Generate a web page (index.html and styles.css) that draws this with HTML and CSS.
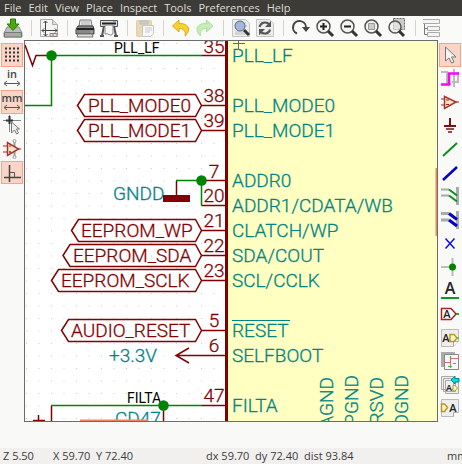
FILE: index.html
```html
<!DOCTYPE html>
<html lang="en">
<head>
<meta charset="utf-8">
<title>Schematic editor</title>
<link rel="stylesheet" href="styles.css">
</head>
<body>
<nav class="menu" aria-label="Main menu">
<button>File</button><button>Edit</button><button>View</button><button>Place</button><button>Inspect</button><button>Tools</button><button>Preferences</button><button>Help</button>
</nav>

<div class="toolbar" role="toolbar" aria-label="Main toolbar">
<button aria-label="Save"><svg viewBox="0 0 20 20"><path d="M4 9h12l3 6v4H1v-4z" fill="#bdbdbd" stroke="#8d8d8d"/><path d="M1.500 14.500h17V19h-17z" fill="#a9a9a9" stroke="#777"/><path d="M14 17h3" stroke="#4e4"/><path d="M7.500 1h5v5H16l-6 6.500L4 6h3.500z" fill="#49a80d" stroke="#2d7803"/></svg></button>
<i class="sep"></i>
<button aria-label="Page settings"><svg viewBox="0 0 20 20"><path d="M1.500 1.500h12l5 5v12h-17z" fill="#f4f4f4" stroke="#aaa"/><path d="M13.500 1.500v5h5" fill="#ddd" stroke="#aaa"/><path d="M6.500 3v15M3 12.500h15M4.500 5l2-2 2 2M4.500 16l2 2 2-2M5 10.500l-2 2 2 2M16 10.500l2 2-2 2" fill="none" stroke="#444"/><path d="M11 15.500h7v3h-7z" fill="#ddd" stroke="#888"/><path d="M13 17h2" stroke="#e55"/></svg></button>
<i class="sep"></i>
<button aria-label="Print"><svg viewBox="0 0 20 20"><path d="M4 8l1-6h11l1 6z" fill="#eee" stroke="#777"/><path d="M6 4h9M6 6h9" stroke="#aaa"/><path d="M3 8h15l1 3v5H1v-5z" fill="#888" stroke="#444"/><path d="M2 11h17" stroke="#222" stroke-width="2"/><path d="M3 16h14l1 3H2z" fill="#ddd" stroke="#777"/><path d="M15 14h3" stroke="#9c6"/></svg></button>
<button aria-label="Plot"><svg viewBox="0 0 20 20"><path d="M1.500 2.500h17v6h-17z" fill="#ddd" stroke="#555"/><path d="M3 5.500h14" stroke="#222" stroke-width="2"/><path d="M5 8l-2 10M15 8l2 10M1 18h4M15 18h4" stroke="#555" stroke-width="2"/><path d="M6 7h8v8q-1 3-3 2-3-2-5-1z" fill="#f7f7f7" stroke="#888"/><path d="M14 3.500h3" stroke="#6d5"/></svg></button>
<i class="sep"></i>
<button aria-label="Paste" disabled><svg viewBox="0 0 20 20"><rect x="1.500" y="2.500" width="15" height="16" rx="1" fill="#ead7b5" stroke="#e2cda8"/><path d="M5 3h8v3H5z" fill="#ccc" stroke="#bbb"/><path d="M7.500 7.500h11v8l-3 3h-8z" fill="#f8f8f8" stroke="#c5c5c5"/><path d="M10 10h7M10 12h7M10 14h5" stroke="#ccc"/></svg></button>
<i class="sep"></i>
<button aria-label="Undo"><svg viewBox="0 0 20 20"><path d="M1.500 8L8 2v3.500c9-.5 13 6 6 12.500 1-5-1.500-7.500-6-7.500V14z" fill="#f7d32d" stroke="#e0a51b"/></svg></button>
<button aria-label="Redo" disabled><svg viewBox="0 0 20 20"><path d="M18 8l-6.500-6v3.500c-9-.5-13 6-6 12.500-1-5 1.500-7.500 6-7.500V14z" fill="#c5edb8" stroke="#acdda5"/></svg></button>
<i class="sep"></i>
<button aria-label="Find"><svg viewBox="0 0 20 20"><path d="M1.500 1.500h13l4 4v13h-17z" fill="#eee" stroke="#c4c4c4"/><path d="M4 5h11M4 8h12M4 14h9M4 16h12" stroke="#bbb"/><circle cx="9" cy="8" r="5" fill="#9eb8df" stroke="#667"/><path d="M13 12l5 5" stroke="#333" stroke-width="3"/></svg></button>
<button aria-label="Find and replace"><svg viewBox="0 0 20 20"><path d="M1.500 1.500h13l4 4v13h-17z" fill="#eee" stroke="#c4c4c4"/><path d="M4 4h9M4 16.500h12" stroke="#ccc"/><path d="M4.500 9c1-5 7-5.500 10-2.500M15 11.500c-1 5-7 5-10 2" fill="none" stroke="#555" stroke-width="2"/><path d="M16 3v6h-6zM4 17v-6h6z" fill="#555"/></svg></button>
<i class="sep"></i>
<button aria-label="Redraw"><svg viewBox="0 0 20 20"><path d="M6 15.500A6.500 6.500 0 1 1 15 10" fill="none" stroke="#444" stroke-width="2"/><path d="M11 9h8l-4 5z" fill="#444"/></svg></button>
<button aria-label="Zoom in"><svg viewBox="0 0 20 20"><circle cx="8.500" cy="8.500" r="6.500" fill="#f4f4f4" stroke="#555" stroke-width="1.500"/><path d="M5 8.500h7M8.500 5v7" stroke="#222" stroke-width="2"/><path d="M13 13l5 5" stroke="#333" stroke-width="3"/></svg></button>
<button aria-label="Zoom out"><svg viewBox="0 0 20 20"><circle cx="8.500" cy="8.500" r="6.500" fill="#f4f4f4" stroke="#555" stroke-width="1.500"/><path d="M5 8.500h7" stroke="#222" stroke-width="2"/><path d="M13 13l5 5" stroke="#333" stroke-width="3"/></svg></button>
<button aria-label="Zoom to fit"><svg viewBox="0 0 20 20"><circle cx="8.500" cy="8.500" r="6.500" fill="#f4f4f4" stroke="#555" stroke-width="1.500"/><path d="M5.500 5.500h6v6h-6z" fill="#ccc" stroke="#999"/><path d="M13 13l5 5" stroke="#333" stroke-width="3"/></svg></button>
<button aria-label="Zoom to selection"><svg viewBox="0 0 20 20"><path d="M6.500.5h11v11h-11z" fill="#ccc" stroke="#666" stroke-dasharray="2 1"/><circle cx="8" cy="9" r="6" fill="#eee" fill-opacity=".6" stroke="#555" stroke-width="1.500"/><path d="M12 13l5 5" stroke="#333" stroke-width="3"/></svg></button>
<i class="sep"></i>
<button aria-label="Hierarchy"><svg viewBox="2 0 20 20"><path d="M1.500 1.500h17v4h-17zM6.500 8.500h12v4h-12zM6.500 14.500h12v4h-12z" fill="#f4f4f4" stroke="#aaa"/><path d="M3.500 6v10.500h3M3.500 10.500h3" fill="none" stroke="#777"/></svg></button>
</div>

<main class="work">
<div class="tools" role="toolbar" aria-label="Display options">
<button class="on" aria-label="Grid"><svg viewBox="0 0 20 20"><path d="M3 3.500h15M3 7.500h15M3 11.500h15M3 15.500h15" stroke="#333" stroke-width="2" stroke-dasharray="2 2"/></svg></button>
<button aria-label="Inches"><svg viewBox="0 0 20 20"><text class="unit" x="10" y="10">in</text><path d="M2 15.500h16M5 13l-3 2.500L5 18M15 13l3 2.500-3 2.500" fill="none" stroke="#555"/></svg></button>
<button class="on" aria-label="Millimetres"><svg viewBox="0 0 20 20"><text class="unit" x="10" y="10">mm</text><path d="M2 15.500h16M5 13l-3 2.500L5 18M15 13l3 2.500-3 2.500" fill="none" stroke="#555"/></svg></button>
<button aria-label="Full-window cursor"><svg viewBox="0 0 20 20"><path d="M1 5.500h18M7.500 0v17" stroke="#888"/><path d="M4 5.500h7M7.500 1v8" stroke="#333" stroke-width="2"/><path d="M9.500 7v11l3-3 2 4 2-1-2-4h3z" fill="#eee" stroke="#777"/></svg></button>
<button aria-label="Hidden pins"><svg viewBox="0 0 20 20"><path d="M12.500 1v18" stroke="#999" stroke-width="2"/><circle cx="12.500" cy="2" r="1.500" fill="#fff" stroke="#999"/><circle cx="12.500" cy="18" r="1.500" fill="#fff" stroke="#999"/><path d="M5.500 3.500v13l11-6.500z" fill="#fbe5c2" stroke="#a33" stroke-width="1.500"/><path d="M1 7h4M1 13h4M16 10h3M7 7h2M7 13h2M8 12v2" stroke="#a22"/></svg></button>
<button class="on" aria-label="Orthogonal wires"><svg viewBox="0 0 20 20"><path d="M7.500 2v17M2 14.500h17" stroke="#444" stroke-width="1.500"/><path d="M8 9.500h4.500V14" fill="none" stroke="#555"/></svg></button>
</div>

<svg class="sheet" viewBox="25 41 412 380" preserveAspectRatio="xMinYMin slice" role="img" aria-label="Schematic sheet">
<defs><pattern id="grid" x="26" y="43" width="12.500" height="12.500" patternUnits="userSpaceOnUse"><path d="M0 0h1v1H0z" fill="#ccc"/></pattern></defs>
<path d="M25 41h412v380H25z" fill="url(#grid)"/>
<path d="M226 30h220v400H226z" fill="#ffffc2"/>
<path class="edge" d="M226.500 30v400"/>
<path class="wire" d="M51 55.500h151M51.500 55.500v50H25M176 180.500h25.500v25M51 405.500h151"/>
<path class="red" d="M25 45l7.500 20.500 3.500-10h15M202 55.500h24M201.500 105.500H226M201.500 130.500H226M202 180.500h24M201.500 205.500H226M201.500 230.500H226M201.500 255.500H226M201.500 280.500H226M201.500 330.500H226M176 355.500h50M189 348l-13 7.500 13 7.500M202 405.500h24M176.500 181v14M51.500 406v15M163.500 406v15M33 420.500h12M38.500 415v6"/>
<path d="M163 195h27v7h-27z" fill="#840000"/>
<g class="red">
<path d="M77.500 105.500l7-11h111l6 11-6 11h-111z"/>
<path d="M77.500 130.500l7-11h111l6 11-6 11h-111z"/>
<path d="M71.500 230.500l7-11h117l6 11-6 11h-117z"/>
<path d="M63 255.500l7-11h125.500l6 11-6 11H70z"/>
<path d="M51.500 280.500l7-11h137l6 11-6 11h-137z"/>
<path d="M61.500 330.500l7-11h127l6 11-6 11h-127z"/>
</g>
<g class="label">
<text x="88" y="112">PLL_MODE0</text><text x="88" y="137">PLL_MODE1</text>
<text x="81" y="237">EEPROM_WP</text><text x="73" y="262">EEPROM_SDA</text><text x="61" y="287">EEPROM_SCLK</text>
<text x="71" y="337">AUDIO_RESET</text>
</g>
<g class="label number">
<text x="214" y="53">35</text><text x="214" y="102">38</text><text x="214" y="127">39</text><text x="214" y="178">7</text><text x="214" y="202">20</text><text x="214" y="227">21</text><text x="214" y="252">22</text><text x="214" y="277">23</text><text x="214" y="327">5</text><text x="214" y="352">6</text><text x="214" y="402">47</text>
</g>
<g class="pin">
<text x="232" y="62">PLL_LF</text><text x="232" y="112">PLL_MODE0</text><text x="232" y="137">PLL_MODE1</text>
<text x="232" y="187">ADDR0</text><text x="232" y="212">ADDR1/CDATA/WB</text><text x="232" y="237">CLATCH/WP</text><text x="232" y="262">SDA/COUT</text><text x="232" y="287">SCL/CCLK</text>
<text x="232" y="337">RESET</text><text x="232" y="362">SELFBOOT</text><text x="232" y="412">FILTA</text>
<text x="113" y="200">GNDD</text><text x="109" y="362">+3.3V</text><text x="115" y="425">CD47</text>
<g class="upright">
<text transform="translate(333 377) rotate(-90)">AGND</text><text transform="translate(358 375) rotate(-90)">PGND</text><text transform="translate(383 377) rotate(-90)">RSVD</text><text transform="translate(408 375) rotate(-90)">DGND</text>
</g>
</g>
<path d="M232 320.500h58" stroke="#008484"/>
<g class="net"><text x="114" y="53">PLL_LF</text><text x="127" y="403">FILTA</text></g>
<g fill="#008400"><circle cx="51.500" cy="55.500" r="5.300"/><circle cx="201.500" cy="180.500" r="5.300"/><circle cx="163.500" cy="405.500" r="5.300"/></g>
<path d="M233 43.500h12M238.500 41v9" stroke="#667"/>
<path d="M80 420.500h68M436.500 168v68" stroke="#f0845c" stroke-width="2"/>
</svg>

<div class="tools" role="toolbar" aria-label="Drawing tools">
<button class="on" aria-label="Select"><svg viewBox="0 0 20 20"><path d="M5.500 2v14l3.500-3 2.500 5 2.500-1-2.500-5H16z" fill="#f3f3f3" stroke="#777"/></svg></button>
<button aria-label="Highlight net"><svg viewBox="0 0 20 20"><path d="M1 4h6v12h4M14 1v18M18 4v10h-6" fill="none" stroke="#bbb" stroke-width="2"/><path d="M1 16.500h8V5.500h10" fill="none" stroke="#f0f" stroke-width="2.500"/></svg></button>
<button aria-label="Place symbol"><svg viewBox="0 0 20 20"><path d="M4.500 4.500v12L16 10z" fill="#fbe5c2" stroke="#a33" stroke-width="1.500"/><path d="M1 7h4M1 13h4M16 10h3M6 8h3M6 12.500h3" stroke="#a22"/></svg></button>
<button aria-label="Place power port"><svg viewBox="0 0 20 20"><path d="M10 3v8M4 11h12" stroke="#7a1010" stroke-width="2"/><path d="M6 14h8M8 17h4" stroke="#7a1010" stroke-width="1.500"/></svg></button>
<button aria-label="Draw wire"><svg viewBox="0 0 20 20"><path d="M3 17L17 4" stroke="#0a8f1a" stroke-width="2"/></svg></button>
<button aria-label="Draw bus"><svg viewBox="0 0 20 20"><path d="M3 17L17 4" stroke="#00c" stroke-width="2.500"/></svg></button>
<button aria-label="Wire to bus entry"><svg viewBox="0 0 20 20"><path d="M17.500 1v18" stroke="#aaa" stroke-width="3"/><path d="M1 3.500h8M1 9.500h8" stroke="#aaa" stroke-width="2"/><path d="M9 3.500l8 6M9 9.500l8 6" stroke="#0a8f1a" stroke-width="2"/></svg></button>
<button aria-label="Bus to bus entry"><svg viewBox="0 0 20 20"><path d="M17.500 1v18" stroke="#aaa" stroke-width="3"/><path d="M1 3.500h8M1 10h8" stroke="#aaa" stroke-width="3"/><path d="M9 3.500l8 6M9 10l8 6" stroke="#00c" stroke-width="3"/></svg></button>
<button aria-label="No connect"><svg viewBox="0 0 20 20"><path d="M5.500 5.500l9 10M14.500 5.500l-9 10" stroke="#11d" stroke-width="1.500"/></svg></button>
<button aria-label="Junction"><svg viewBox="0 0 20 20"><path d="M1 10h12M12.500 1v18" stroke="#bbb" stroke-width="2"/><circle cx="12.500" cy="10" r="3.500" fill="#008400"/></svg></button>
<button aria-label="Net label"><svg viewBox="0 0 20 20"><text class="glyph big" x="10" y="14">A</text><path d="M1 18h18" stroke="#0a9a20" stroke-width="2"/></svg></button>
<button aria-label="Global label"><svg viewBox="0 0 20 20"><path d="M1.500 4.500H11l5 5.500-5 5.500H1.500z" fill="#fff" stroke="#a22" stroke-width="1.500"/><path d="M16 10h3" stroke="#2a2" stroke-width="2"/><text class="glyph" x="7" y="14">A</text></svg></button>
<button aria-label="Hierarchical label"><svg viewBox="0 0 20 20"><path d="M1.500 1.500h17v12l-5 5h-12z" fill="#eee" stroke="#bbb"/><path d="M13.500 18.500v-5h5" fill="#fff" stroke="#aaa"/><text class="glyph" x="6" y="14">A</text><path d="M10 6.500h4l3 3.500-3 3.500h-4z" fill="#fff4cf" stroke="#b8991d" stroke-width="1.500"/><path d="M17 10h2" stroke="#2a2"/></svg></button>
<button aria-label="Hierarchical sheet"><svg viewBox="0 0 20 20"><path d="M1 1h14v15H1z" fill="#aaa"/><path d="M4.500 3.500h14v15h-14z" fill="#f7f7f7" stroke="#888"/><path d="M5 11.500h5.500v-4H18M10.500 5v12M13 12.500h3" fill="none" stroke="#e56c6c"/><path d="M10.500 5v4M8 15.500h4" stroke="#4a4"/></svg></button>
<button aria-label="Import sheet pin"><svg viewBox="0 0 20 20"><path d="M1.500 1.500h12v13h-12zM3.500 3.500h12v13h-12zM5.500 5.500h13v13h-13z" fill="#eee" stroke="#aaa"/><path d="M11 5l4-4v2.500h4v3.500h-4V9z" fill="#0dd" stroke="#088"/><text class="glyph tiny" x="9" y="16">A</text><path d="M13 10.500h2l2.500 2.500-2.500 3h-2z" fill="#fff4cf" stroke="#b8991d"/></svg></button>
<button aria-label="Sheet pin"><svg viewBox="0 0 20 20"><path d="M1.500 1.500h17v12l-5 5h-12z" fill="#eee" stroke="#bbb"/><path d="M13.500 18.500v-4h5" fill="#fff" stroke="#aaa"/><path d="M1.500 6h3l3 3.500-3 4h-3z" fill="#fff4cf" stroke="#b8991d" stroke-width="1.500"/><text class="glyph" x="13" y="14">A</text></svg></button>
</div>
</main>

<footer class="status"><span>Z 5.50</span><span>X 59.70&nbsp; Y 72.40</span><span>dx 59.70&nbsp; dy 72.40&nbsp; dist 93.84</span><span>mm</span></footer>
</body>
</html>
```
FILE: styles.css
```css
* { box-sizing: border-box; }

body {
  margin: 0;
  min-height: 100vh;
  display: grid;
  grid-template-columns: minmax(0, 1fr);
  grid-template-rows: 16px 24px 1fr 16px;
  background: #f9f9f8;
  color: #3c3c3c;
  font: 11px/16px "Open Sans", sans-serif;
  overflow: hidden;
}

button {
  border: 0;
  padding: 0;
  background: none;
  font: inherit;
  color: inherit;
}

.menu {
  display: flex;
  gap: 7px;
  padding-left: 4px;
  background: #3c3b37;
  color: #dfdbd2;
}

.toolbar {
  display: flex;
  align-items: center;
  padding-left: 1px;
  background: #fafaf9;
}

.toolbar button {
  width: 24px;
  height: 24px;
  display: grid;
  place-items: center;
}

.toolbar svg,
.tools svg {
  width: 20px;
  height: 20px;
  display: block;
}

.sep {
  width: 1px;
  height: 16px;
  margin: 0 5px 0 6px;
  background: #d4d3d1;
}

.work {
  display: grid;
  grid-template-columns: 24px minmax(0, 1fr) 24px;
  min-height: 0;
  margin-bottom: 26px;
}

.tools {
  display: grid;
  grid-template-rows: repeat(16, 1fr);
  padding: 3px 1px 2px;
}

.tools button {
  display: grid;
  place-items: center;
  border: 1px solid transparent;
  min-height: 0;
}

.tools .on {
  background: #fad5c7;
  border-color: #f2a688;
}

.sheet {
  width: 100%;
  height: 100%;
  min-height: 0;
  background: #fff;
  border: 1px solid #6c6c6c;
}

.sheet text {
  font-family: Roboto, sans-serif;
  font-size: 19px;
  font-weight: 300;
  stroke-width: 0.3;
}

.edge { stroke: #840000; stroke-width: 3; }
.wire { fill: none; stroke: #008400; stroke-width: 1.5; }
.red { fill: none; stroke: #840000; stroke-width: 1.5; }
.label { fill: #840000; stroke: #840000; }
.number { text-anchor: middle; }
.pin { fill: #008484; stroke: #008484; }
.upright { text-anchor: end; }

.sheet .net text {
  font-size: 14px;
  font-weight: 400;
}

.unit,
.glyph {
  font-family: "Open Sans", sans-serif;
  font-size: 11px;
  font-weight: 600;
  fill: #444;
  text-anchor: middle;
}

.glyph { fill: #222; }
.big { font-size: 16px; }
.tiny { font-size: 9px; }

.status {
  display: grid;
  grid-template-columns: 50px 153px 241px 1fr;
  padding-left: 3px;
  background: #f1f0ef;
  white-space: nowrap;
  overflow: hidden;
}
```
